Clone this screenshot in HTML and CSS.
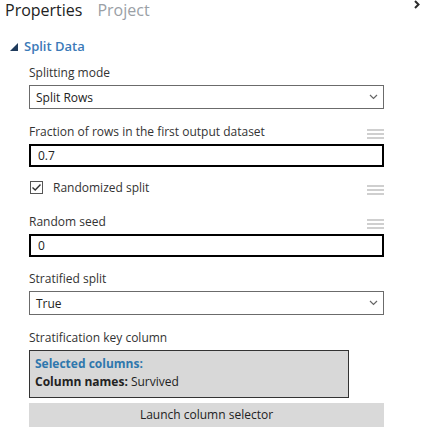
FILE: index.html
```
<!DOCTYPE html>
<html>
<head>
<meta charset="utf-8">
<link rel="stylesheet" href="styles.css">
</head>
<body>
<div class="panel">
  <div class="tabs">
    <span class="tab active">Properties</span>
    <span class="tab">Project</span>
    <svg class="collapse" width="6" height="9" viewBox="0 0 6 9"><path d="M1 1 L4.5 4.5 L1 8" fill="none" stroke="#2b2b2b" stroke-width="2"/></svg>
  </div>
  <div class="section-title">
    <svg class="tri" width="8" height="8" viewBox="0 0 8 8"><path d="M8 0 L8 8 L0 8 Z" fill="#1f3b5c"/></svg>
    <span>Split Data</span>
  </div>
  <div class="fields">
    <div class="field">
      <div class="label-row"><span class="label">Splitting mode</span></div>
      <div class="select s1"><span>Split Rows</span><svg width="9" height="6" viewBox="0 0 9 6"><path d="M1 1 L4.5 4.5 L8 1" fill="none" stroke="#666" stroke-width="1.2"/></svg></div>
    </div>
    <div class="field">
      <div class="label-row"><span class="label">Fraction of rows in the first output dataset</span><span class="ham"><i></i><i></i><i></i></span></div>
      <div class="input i1">0.7</div>
    </div>
    <div class="field check-field">
      <div class="label-row"><span class="check-wrap"><span class="checkbox"><svg width="11" height="9" viewBox="0 0 11 9"><path d="M1.5 4.5 L4.2 7 L9.5 1.5" fill="none" stroke="#333" stroke-width="1.4"/></svg></span><span class="label">Randomized split</span></span><span class="ham"><i></i><i></i><i></i></span></div>
    </div>
    <div class="field">
      <div class="label-row"><span class="label">Random seed</span><span class="ham"><i></i><i></i><i></i></span></div>
      <div class="input">0</div>
    </div>
    <div class="field">
      <div class="label-row"><span class="label">Stratified split</span></div>
      <div class="select s2"><span>True</span><svg width="9" height="6" viewBox="0 0 9 6"><path d="M1 1 L4.5 4.5 L8 1" fill="none" stroke="#666" stroke-width="1.2"/></svg></div>
    </div>
    <div class="field">
      <div class="label-row"><span class="label">Stratification key column</span></div>
      <div class="colbox">
        <div class="sel">Selected columns:</div>
        <div class="names"><b>Column names:</b> Survived</div>
      </div>
      <div class="launch">Launch column selector</div>
    </div>
  </div>
</div>
</body>
</html>
```
FILE: styles.css
```
html, body { margin: 0; padding: 0; background: #fff; }
body { font-family: "Segoe UI", "Open Sans", "Noto Sans", sans-serif; color: #222; width: 434px; height: 434px; overflow: hidden; }
.panel { padding: 0 0 0 5px; }
.tabs { display: flex; align-items: flex-start; height: 22px; position: relative; }
.tab { font-size: 16px; line-height: 20px; color: #9aa0a6; margin-right: 15px; margin-top: 0; }
.tab.active { color: #222; }
.collapse { position: absolute; left: 409px; top: 0px; }
.section-title { display: flex; align-items: center; margin-top: 16px; padding-left: 5px; height: 16px; }
.section-title .tri { margin-right: 6px; margin-top: 2px; }
.section-title span { font-size: 13px; font-weight: 600; color: #3b7ab8; }
.fields { padding-left: 24px; width: 355px; margin-top: 9px; }
.label-row { display: flex; justify-content: space-between; align-items: center; height: 19px; }
.label { font-size: 12px; color: #333; }
.select { box-sizing: border-box; height: 24px; border: 1px solid #6b6b6b; display: flex; align-items: center; justify-content: space-between; padding: 0 5px 0 6px; font-size: 12px; margin-top: 3px; margin-bottom: 13px; }
.input { box-sizing: border-box; height: 23px; border: 2px solid #000; font-size: 12px; padding-left: 7px; line-height: 19px; margin-top: 3px; margin-bottom: 12px; }
.input.i1 { margin-bottom: 11px; }
.ham { display: flex; flex-direction: column; gap: 2px; width: 17px; margin-top: 4px; }
.ham i { display: block; height: 2px; background: #cfcfcf; }
.check-field { margin-bottom: 15px; }
.check-wrap { display: flex; align-items: center; }
.checkbox { box-sizing: border-box; width: 13px; height: 13px; border: 1px solid #555; display: flex; align-items: center; justify-content: center; margin-left: 1px; margin-right: 10px; }
.colbox { box-sizing: border-box; width: 320px; height: 48px; border: 1px solid #333; background: #d8d8d8; padding: 4px 5px; font-size: 12px; margin-top: 3px; }
.sel { color: #2e77ad; font-weight: 700; line-height: 18px; }
.names { line-height: 18px; color: #222; }
.names b { font-weight: 700; }
.launch { height: 24px; background: #d9d9d9; margin-top: 5px; font-size: 12px; text-align: center; line-height: 24px; color: #222; }
```
